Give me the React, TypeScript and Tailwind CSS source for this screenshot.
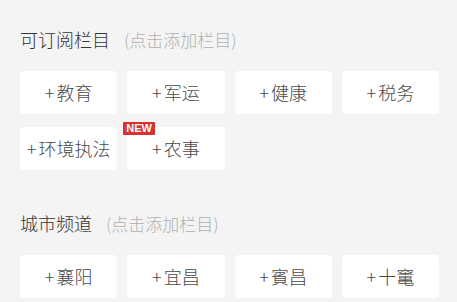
const subscribable = [
  { name: '教育' },
  { name: '军运' },
  { name: '健康' },
  { name: '税务' },
  { name: '环境执法' },
  { name: '农事', isNew: true },
]

const cities = [{ name: '襄阳' }, { name: '宜昌' }, { name: '賓昌' }, { name: '十竃' }]

function Chip({ name, isNew }: { name: string; isNew?: boolean }) {
  return (
    <div className="relative h-[43px] bg-white rounded-[4px] flex items-center justify-center text-[18px] font-light text-[#4a4a4a]">
      <span className="mr-[2px]">+</span>
      <span>{name}</span>
      {isNew && (
        <span className="absolute -top-[5px] -left-[4px] h-[13px] px-[3px] flex items-center bg-[#d8312e] text-white text-[11px] font-bold leading-none rounded-[1px] font-['Liberation_Sans',sans-serif]">
          NEW
        </span>
      )}
    </div>
  )
}

function Section({ title, items }: { title: string; items: { name: string; isNew?: boolean }[] }) {
  return (
    <div>
      <div className="flex items-baseline h-[20px] leading-[20px] font-light">
        <span className="text-[18px] text-[#333]">{title}</span>
        <span className="ml-[14px] text-[17px] text-[#b0b0b0]">(点击添加栏目)</span>
      </div>
      <div className="mt-[22px] grid grid-cols-4 gap-x-[10px] gap-y-[13px]">
        {items.map(it => <Chip key={it.name} {...it} />)}
      </div>
    </div>
  )
}

export default function App() {
  return (
    <div className="w-[457px] h-[302px] overflow-hidden bg-[#f4f4f4] pl-[20px] pr-[18px] pt-[29px] font-['Noto_Sans_CJK_SC',sans-serif]">
      <Section title="可订阅栏目" items={subscribable} />
      <div className="mt-[43px]">
        <Section title="城市频道" items={cities} />
      </div>
    </div>
  )
}
